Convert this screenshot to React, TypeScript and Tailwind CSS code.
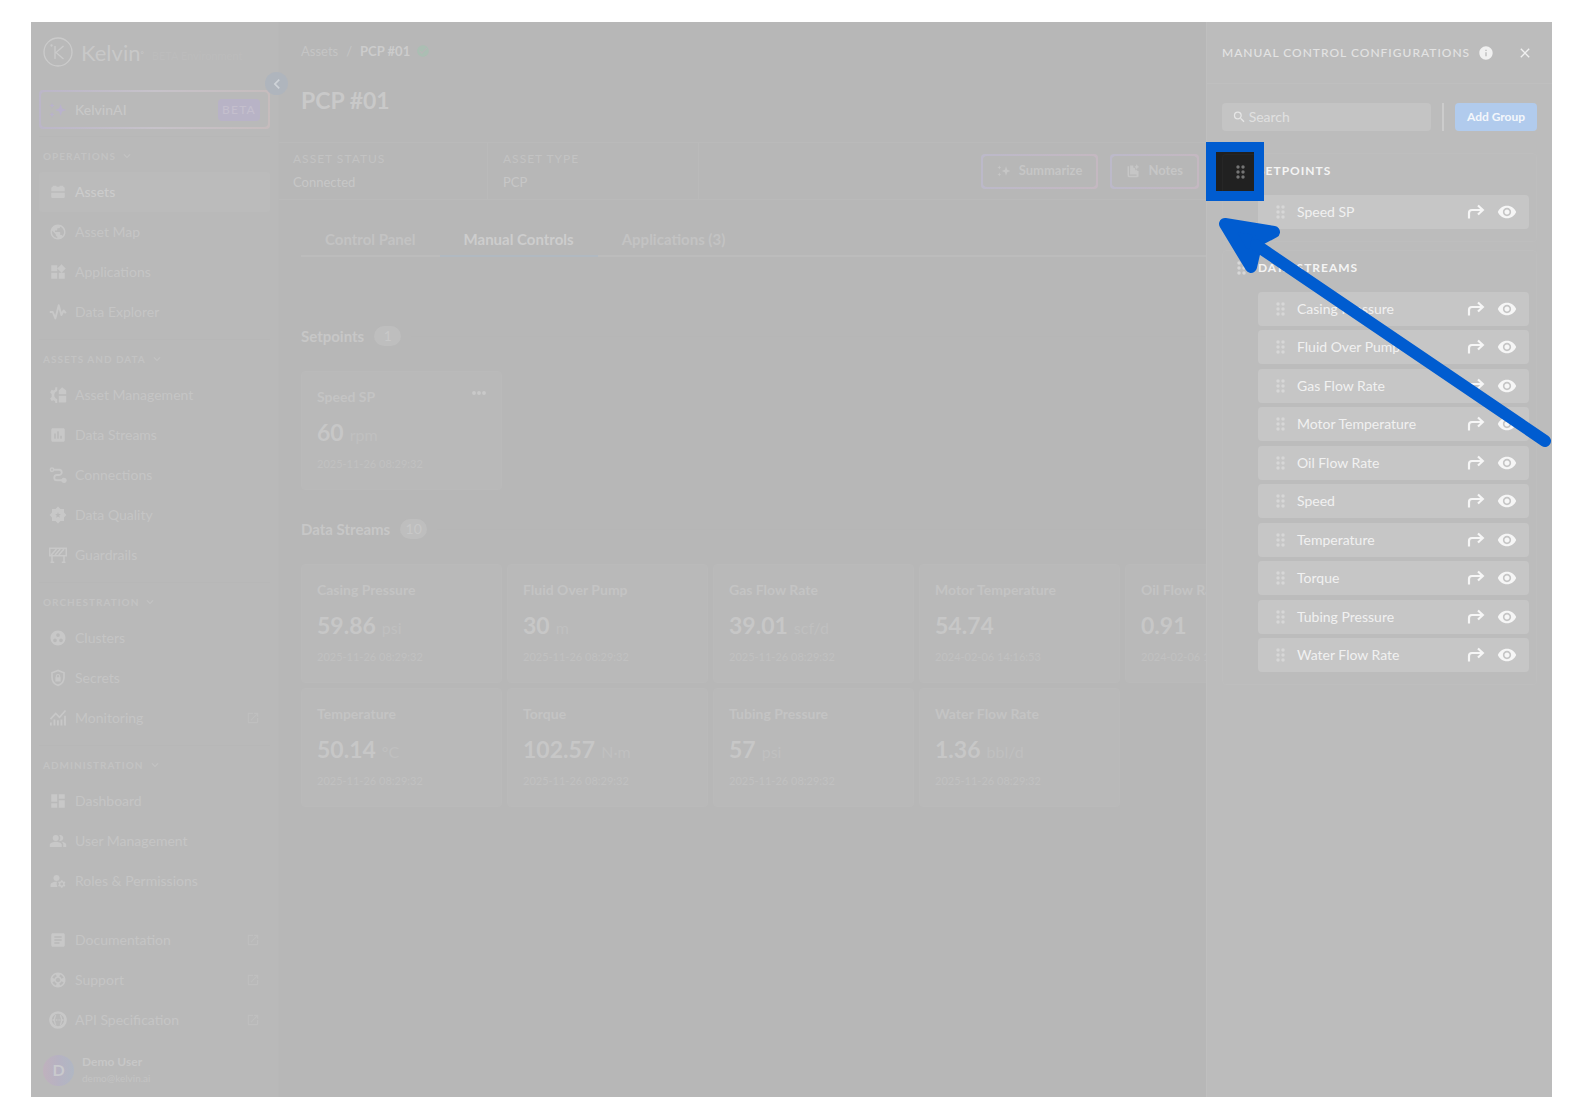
import React from 'react';
import {
  MdPublic,
  MdWidgets,
  MdAssessment,
  MdGroupWork,
  MdDashboard,
  MdPeopleAlt,
  MdManageAccounts,
  MdArticle,
  MdSupport,
  MdOpenInNew,
  MdCheckCircle,
  MdInfo,
  MdClose,
  MdSearch,
  MdRemoveRedEye,
  MdKeyboardArrowDown,
  MdKeyboardArrowLeft,
} from 'react-icons/md';

type IconProps = { className?: string };

const Svg = ({ className, children }: IconProps & { children: React.ReactNode }) => (
  <svg viewBox="0 0 24 24" className={className} fill="currentColor" aria-hidden="true">
    {children}
  </svg>
);

const AssetsIcon = ({ className }: IconProps) => (
  <Svg className={className}>
    <path d="M3 11V7a2 2 0 0 1 2-2V3.500h5V5h4V3.500h5V5a2 2 0 0 1 2 2v4z" />
    <path d="M3 13h18v5.500a1.500 1.500 0 0 1-1.500 1.500h-15A1.500 1.500 0 0 1 3 18.500z" />
  </Svg>
);

const PulseIcon = ({ className }: IconProps) => (
  <Svg className={className}>
    <path d="M1 12h4l3.500 8.500L13 3l3.500 13 3-6 3 3.500" fill="none" stroke="currentColor" strokeWidth="2.600" strokeLinejoin="round" />
  </Svg>
);

const ManagementIcon = ({ className }: IconProps) => (
  <Svg className={className}>
    <path d="M11 1.500v5A5.800 5.800 0 0 0 11 17.500v5H8.500L8 20l-2-1-2.500 1-2-3.500 2-2v-4l-2-2L3.500 5 6 6l2-1 .5-3.500z" />
    <path d="M13 11V6l4.500-4.500L23 6v5zM13 13h10v8a1 1 0 0 1-1 1h-9z" />
  </Svg>
);

const ConnectionsIcon = ({ className }: IconProps) => (
  <Svg className={className}>
    <circle cx="4" cy="5" r="2.200" fill="none" stroke="currentColor" strokeWidth="2" />
    <path d="M6 5h7.500a3.500 3.500 0 0 1 0 7h-3a3.500 3.500 0 0 0 0 7H18" fill="none" stroke="currentColor" strokeWidth="2.400" />
    <circle cx="20" cy="19" r="3.500" />
  </Svg>
);

const QualityIcon = ({ className }: IconProps) => (
  <Svg className={className}>
    <path
      fillRule="evenodd"
      d="M12 .8 15.300 4H20v4.700l3.200 3.300-3.200 3.300V20h-4.700L12 23.200 8.700 20H4v-4.700L.8 12 4 8.700V4h4.700zM12 8l-1 2.700-2.800.2 2.200 1.800-.8 2.800 2.400-1.600 2.400 1.600-.8-2.800 2.200-1.800-2.800-.2z"
    />
  </Svg>
);

const GuardrailsIcon = ({ className }: IconProps) => (
  <Svg className={className}>
    <path d="M1 3h22v10H1zM4 13v8M20 13v8M2 21.500h5M17 21.500h5M3 12l7-8M8 12l7-8M13 12l7-8" fill="none" stroke="currentColor" strokeWidth="2" />
  </Svg>
);

const SecretsIcon = ({ className }: IconProps) => (
  <Svg className={className}>
    <path d="M12 2 4 5v6c0 5 3.400 9.300 8 10.800 4.600-1.500 8-5.800 8-10.800V5z" fill="none" stroke="currentColor" strokeWidth="2.200" />
    <path fillRule="evenodd" d="M9 11V9.500a3 3 0 0 1 6 0V11h.5v5.500h-7V11zm1.600 0h2.800V9.500a1.400 1.400 0 0 0-2.800 0z" />
  </Svg>
);

const MonitoringIcon = ({ className }: IconProps) => (
  <Svg className={className}>
    <path d="M2 13.500 9 6l5 5 8-9" fill="none" stroke="currentColor" strokeWidth="2.200" />
    <path d="M2.500 22v-4M7.200 22v-8M11.900 22v-7M16.600 22v-8M21.300 22V9" stroke="currentColor" strokeWidth="2.400" />
  </Svg>
);

const ApiIcon = ({ className }: IconProps) => (
  <Svg className={className}>
    <circle cx="12" cy="12" r="10" fill="none" stroke="currentColor" strokeWidth="3.600" />
    <path d="M9.500 6C6.500 6 9 11 6 12c3 1 .5 6 3.500 6M14.500 6c3 0 .5 5 3.500 6-3 1-.5 6-3.500 6M9 12h1.400M11.500 12h1.200M13.800 12h1.400" fill="none" stroke="currentColor" strokeWidth="1.800" />
  </Svg>
);

const SparkleIcon = ({ className }: IconProps) => (
  <Svg className={className}>
    <path d="M15.500 4 17.500 10 23 12l-5.500 2-2 6-2-6L8 12l5.500-2zM4 2.500l1 2.500 2.500 1L5 7 4 9.500 3 7 .5 6 3 5zM4 14.500l1 2.500 2.500 1L5 19l-1 2.500L3 19 .5 18 3 17z" />
  </Svg>
);

const NotesIcon = ({ className }: IconProps) => (
  <Svg className={className}>
    <path d="M4 4v16a1.500 1.500 0 0 0 1.500 1.500H20" fill="none" stroke="currentColor" strokeWidth="2.600" />
    <path d="M7 2.500h5.500V6L16 7.500V11l1.500-1 2.500 2v6H7zM18.500 0l1.400 3.400L23 5l-3.100 1.500-1.400 3.500-1.400-3.500L14 5l3.100-1.600zM18 12h3.500v10H18z" />
  </Svg>
);

const MoreIcon = ({ className }: IconProps) => (
  <svg viewBox="0 0 14 4" className={className} fill="currentColor" aria-hidden="true">
    <circle cx="2" cy="2" r="1.900" />
    <circle cx="7" cy="2" r="1.900" />
    <circle cx="12" cy="2" r="1.900" />
  </svg>
);

const MoveIcon = ({ className }: IconProps) => (
  <svg viewBox="0 0 18 16" className={className} fill="none" stroke="currentColor" strokeWidth="2.200" aria-hidden="true">
    <path d="M2 14.500V9a3 3 0 0 1 3-3h11M11 1.500 15.800 6 11 10.500" />
  </svg>
);

const DragDots = ({ className }: IconProps) => (
  <svg viewBox="0 0 9 14" className={className} fill="currentColor" aria-hidden="true">
    {[2, 7, 12].map((y) => (
      <React.Fragment key={y}>
        <circle cx="2" cy={y} r="1.700" />
        <circle cx="7" cy={y} r="1.700" />
      </React.Fragment>
    ))}
  </svg>
);

type NavItem = { label: string; icon: React.ComponentType<IconProps>; external?: boolean; active?: boolean };

const groups: { title: string; items: NavItem[] }[] = [
  {
    title: 'OPERATIONS',
    items: [
      { label: 'Assets', icon: AssetsIcon, active: true },
      { label: 'Asset Map', icon: MdPublic },
      { label: 'Applications', icon: MdWidgets },
      { label: 'Data Explorer', icon: PulseIcon },
    ],
  },
  {
    title: 'ASSETS AND DATA',
    items: [
      { label: 'Asset Management', icon: ManagementIcon },
      { label: 'Data Streams', icon: MdAssessment },
      { label: 'Connections', icon: ConnectionsIcon },
      { label: 'Data Quality', icon: QualityIcon },
      { label: 'Guardrails', icon: GuardrailsIcon },
    ],
  },
  {
    title: 'ORCHESTRATION',
    items: [
      { label: 'Clusters', icon: MdGroupWork },
      { label: 'Secrets', icon: SecretsIcon },
      { label: 'Monitoring', icon: MonitoringIcon, external: true },
    ],
  },
  {
    title: 'ADMINISTRATION',
    items: [
      { label: 'Dashboard', icon: MdDashboard },
      { label: 'User Management', icon: MdPeopleAlt },
      { label: 'Roles & Permissions', icon: MdManageAccounts },
    ],
  },
];

const footerItems: NavItem[] = [
  { label: 'Documentation', icon: MdArticle, external: true },
  { label: 'Support', icon: MdSupport, external: true },
  { label: 'API Specification', icon: ApiIcon, external: true },
];

const streams = [
  { name: 'Casing Pressure', value: '59.86', unit: 'psi', time: '2025-11-26 08:29:32' },
  { name: 'Fluid Over Pump', value: '30', unit: 'm', time: '2025-11-26 08:29:32' },
  { name: 'Gas Flow Rate', value: '39.01', unit: 'scf/d', time: '2025-11-26 08:29:32' },
  { name: 'Motor Temperature', value: '54.74', unit: '', time: '2024-02-06 14:16:53' },
  { name: 'Oil Flow Rate', value: '0.91', unit: '', time: '2024-02-06 14:16:53' },
  { name: 'Temperature', value: '50.14', unit: '°C', time: '2025-11-26 08:29:32' },
  { name: 'Torque', value: '102.57', unit: 'N·m', time: '2025-11-26 08:29:32' },
  { name: 'Tubing Pressure', value: '57', unit: 'psi', time: '2025-11-26 08:29:32' },
  { name: 'Water Flow Rate', value: '1.36', unit: 'bbl/d', time: '2025-11-26 08:29:32' },
];

const configStreams = [
  'Casing Pressure',
  'Fluid Over Pump',
  'Gas Flow Rate',
  'Motor Temperature',
  'Oil Flow Rate',
  'Speed',
  'Temperature',
  'Torque',
  'Tubing Pressure',
  'Water Flow Rate',
];

const NavLink = ({ item }: { item: NavItem }) => {
  const Icon = item.icon;
  return (
    <a
      href="#"
      className={`flex h-10 items-center gap-2 rounded px-2.5 text-sm ${
        item.active ? 'bg-[#bbbbbb] font-medium text-[#cccccc]' : 'text-[#c5c5c5]'
      }`}
    >
      <Icon className="size-[18px] shrink-0 text-[#c8c8c8]" />
      <span className="flex-1">{item.label}</span>
      {item.external && <MdOpenInNew className="size-[14px] text-[#bfbfbf]" />}
    </a>
  );
};

const Sidebar = () => (
  <aside className="relative flex w-[248px] shrink-0 flex-col border-r border-[#b8b8b8] bg-[#b9b9b9] px-2">
    <div className="flex h-[68px] items-center gap-2 pb-2 pl-1">
      <svg viewBox="0 0 30 30" className="size-[30px] shrink-0 text-[#cbcbcb]" fill="none" stroke="currentColor" strokeWidth="1.300" aria-hidden="true">
        <circle cx="15" cy="15" r="14" />
        <path d="M12 9v13M20.500 9 13 15.500l7.500 6.500" />
        <circle cx="8.500" cy="8.500" r=".5" />
      </svg>
      <span className="text-[22px] text-[#c8c8c8]">
        Kelvin<sup className="text-[8px]">°</sup>
      </span>
      <span className="pt-2 text-[11px] whitespace-nowrap text-[#bcbcbc]">BETA Environment</span>
    </div>

    <div className="mb-[7px] rounded bg-gradient-to-r from-[#bbb6c8] via-[#c6c2c9] to-[#c6bcbd] p-0.5">
      <a href="#" className="flex h-[35px] items-center gap-2 rounded-sm bg-[#b9b9b9] px-2 text-sm font-medium text-[#c8c8c8]">
        <SparkleIcon className="size-[18px] text-[#b9b2cc]" />
        <span className="flex-1">KelvinAI</span>
        <span className="rounded-sm bg-[#b8b3c6] px-1 text-xs leading-[22px] tracking-widest text-[#c4bfcd]">BETA</span>
      </a>
    </div>

    <button
      type="button"
      aria-label="Collapse menu"
      className="absolute top-[50px] -right-2.5 z-10 flex size-[23px] items-center justify-center rounded-full bg-[#afb5bd] text-[#cfd3d8]"
    >
      <MdKeyboardArrowLeft className="size-5" />
    </button>

    <nav>
      {groups.map((group) => (
        <section key={group.title} className="border-t border-[#b7b7b7] pt-1 pb-[7px]">
          <button type="button" className="mb-px flex h-[30px] items-center gap-1 pl-1 text-[10px] font-bold tracking-[1px] text-[#c3c3c3]">
            {group.title}
            <MdKeyboardArrowDown className="size-[14px]" />
          </button>
          {group.items.map((item) => (
            <NavLink key={item.label} item={item} />
          ))}
        </section>
      ))}
    </nav>

    <div className="mt-auto pb-[11px]">
      {footerItems.map((item) => (
        <NavLink key={item.label} item={item} />
      ))}
      <div className="mt-3.5 flex items-center gap-2 pl-1">
        <div className="flex size-[31px] items-center justify-center rounded-full bg-gradient-to-r from-[#bfb1bd] via-[#b6b2c2] to-[#b0b7c3] font-bold text-[#c9c9cd]">
          D
        </div>
        <div>
          <div className="text-xs leading-4 font-bold text-[#c7c7c7]">Demo User</div>
          <div className="text-[10px] leading-4 text-[#c4c4c4]">demo@kelvin.ai</div>
        </div>
      </div>
    </div>
  </aside>
);

const StreamCard = ({ name, value, unit, time, menu }: (typeof streams)[number] & { menu?: boolean }) => (
  <article className="h-[119px] rounded border border-[#bababa] bg-[#b9b9b9] px-[15px] pt-[15px]">
    <div className="flex items-start justify-between">
      <h3 className="text-sm font-bold text-[#c4c4c4]">{name}</h3>
      {menu && (
        <button type="button" aria-label="More actions" className="pt-1 text-[#c9c9c9]">
          <MoreIcon className="h-1 w-3.5" />
        </button>
      )}
    </div>
    <div className="mt-[11px] flex h-7 items-baseline gap-1.5">
      <span className="text-[23px] leading-7 font-bold text-[#c7c7c7]">{value}</span>
      <span className="text-base leading-7 text-[#c0c0c0]">{unit}</span>
    </div>
    <p className="mt-2 text-[11px] leading-5 text-[#c1c1c1]">{time}</p>
  </article>
);

const SectionHeading = ({ title, count }: { title: string; count: number }) => (
  <div className="flex items-center gap-2.5">
    <h2 className="text-[15px] leading-5 font-bold text-[#c7c7c7]">{title}</h2>
    <span className="w-[27px] rounded-full bg-[#bebebe] text-center text-sm leading-5 text-[#c8c8c8]">{count}</span>
    <span className="h-px flex-1 bg-[#b6b6b6]"></span>
  </div>
);

const OutlineButton = ({ icon: Icon, label }: { icon: React.ComponentType<IconProps>; label: string }) => (
  <button type="button" className="rounded bg-gradient-to-r from-[#bcb9c9] to-[#c4b8c1] p-0.5">
    <span className="flex h-[31px] items-center gap-2 rounded-sm bg-[#b7b7b7] px-[14px] text-[13px] font-bold text-[#c6c6c6]">
      <Icon className="size-[14px]" />
      {label}
    </span>
  </button>
);

const Main = () => (
  <main className="min-w-0 flex-1 overflow-hidden bg-[#b7b7b7]">
    <nav aria-label="Breadcrumb" className="flex items-center gap-2 pt-[19px] pl-[22px] text-[13px] leading-5 text-[#c5c5c5]">
      <a href="#">Assets</a>
      <span>/</span>
      <span className="flex items-center gap-1.5 font-bold text-[#cccccc]">
        PCP #01
        <MdCheckCircle className="size-[14px] text-[#abbeb3]" />
      </span>
    </nav>
    <h1 className="mt-[23px] pl-[22px] text-[23px] leading-8 font-bold text-[#c9c9c9]">PCP #01</h1>

    <div className="mt-[26px] flex h-[58px] border-y border-[#bababa]">
      <div className="w-[209px] border-r border-[#bababa] pt-2 pl-3.5">
        <div className="text-xs leading-4 tracking-[1px] text-[#c3c3c3]">ASSET STATUS</div>
        <div className="mt-[5px] text-[13px] leading-5 text-[#c7c7c7]">Connected</div>
      </div>
      <div className="w-[211px] border-r border-[#bababa] pt-2 pl-[15px]">
        <div className="text-xs leading-4 tracking-[1px] text-[#c3c3c3]">ASSET TYPE</div>
        <div className="mt-[5px] text-[13px] leading-5 text-[#c7c7c7]">PCP</div>
      </div>
      <div className="mr-[353px] ml-auto flex items-center gap-3">
        <OutlineButton icon={SparkleIcon} label="Summarize" />
        <OutlineButton icon={NotesIcon} label="Notes" />
      </div>
    </div>

    <div role="tablist" className="mt-6 ml-[22px] flex h-[33px] border-b-2 border-[#bcbcbc] text-[15px] font-bold text-[#c3c3c3]">
      <button role="tab" type="button" aria-selected="false" className="px-6">Control Panel</button>
      <button role="tab" type="button" aria-selected="true" className="-mb-0.5 border-b-2 border-[#b1b9c1] px-6 text-[#cdcdcd]">
        Manual Controls
      </button>
      <button role="tab" type="button" aria-selected="false" className="px-6">Applications (3)</button>
    </div>

    <div className="pt-[69px] pl-[22px]">
      <SectionHeading title="Setpoints" count={1} />
      <div className="mt-[25px] mb-[29px] grid grid-cols-[repeat(5,201px)]">
        <StreamCard name="Speed SP" value="60" unit="rpm" time="2025-11-26 08:29:32" menu />
      </div>
      <SectionHeading title="Data Streams" count={10} />
      <div className="mt-[25px] grid grid-cols-[repeat(5,201px)] gap-[5px]">
        {streams.map((stream) => (
          <StreamCard key={stream.name} {...stream} />
        ))}
      </div>
    </div>
  </main>
);

const ConfigRow = ({ label }: { label: string }) => (
  <li className="flex h-[34px] items-center rounded bg-[#c6c6c6] pr-3 pl-[18px] text-sm text-[#f1f1f1]">
    <DragDots className="h-[14px] w-[9px] text-[#d7d7d7]" />
    <span className="ml-3 flex-1">{label}</span>
    <button type="button" aria-label={`Move ${label}`} className="mr-3 text-[#f6f6f6]">
      <MoveIcon className="h-4 w-[18px]" />
    </button>
    <button type="button" aria-label={`Toggle ${label}`} className="text-[#f6f6f6]">
      <MdRemoveRedEye className="size-5" />
    </button>
  </li>
);

const ConfigGroup = ({ title, rows, listClass = '' }: { title: string; rows: string[]; listClass?: string }) => (
  <section className="rounded border border-[#bebebe] pr-[7px] pb-3 pl-[35px]">
    <div className="-ml-[21px] flex h-[41px] items-center gap-3 pb-2">
      <DragDots className="h-[14px] w-[9px] text-[#d7d7d7]" />
      <h3 className="text-xs font-bold tracking-[1px] text-[#f4f4f4]">{title}</h3>
    </div>
    <ul className={`flex flex-col justify-between ${listClass}`}>
      {rows.map((row) => (
        <ConfigRow key={row} label={row} />
      ))}
    </ul>
  </section>
);

const ConfigPanel = () => (
  <aside className="absolute inset-y-0 right-0 w-[346px] border-l border-[#bfbfbf] bg-[#bcbcbc]">
    <header className="flex h-[62px] items-center border-b border-[#bfbfbf] pr-[19px] pl-[15px]">
      <h2 className="text-xs font-medium tracking-[1px] whitespace-nowrap text-[#e3e3e3]">MANUAL CONTROL CONFIGURATIONS</h2>
      <MdInfo className="ml-2 size-4 shrink-0 text-[#f0f0f0]" />
      <button type="button" aria-label="Close" className="ml-auto text-[#f0f0f0]">
        <MdClose className="size-4" />
      </button>
    </header>

    <div className="flex flex-col gap-2 px-[15px] pt-[19px]">
      <div className="mb-[14px] flex h-7 items-center">
        <label className="flex h-7 flex-1 items-center gap-0.5 rounded bg-[#c4c4c4] pl-2.5 text-[#e6e6e6]">
          <MdSearch className="size-4" />
          <input type="search" aria-label="Search" placeholder="Search" className="w-full bg-transparent text-sm outline-none placeholder:text-[#e0e0e0]" />
        </label>
        <span className="mx-[11px] h-7 w-0.5 bg-[#cccccc]"></span>
        <button type="button" className="h-7 w-[82px] rounded bg-[#b1cbed] text-xs font-bold text-[#f4f7fb]">Add Group</button>
      </div>
      <ConfigGroup title="SETPOINTS" rows={['Speed SP']} />
      <ConfigGroup title="DATA STREAMS" rows={configStreams} listClass="min-h-[380px]" />
    </div>

    {/* Spotlight on the drag handle */}
    <div className="absolute top-[120px] -left-px h-[59px] w-[58px] border-[10px] border-[#005cd0] bg-[#202020]">
      <div className="mt-0.5 ml-1.5 flex h-[37px] items-center rounded-tl border-t border-l border-[#262626] bg-[#212121] pb-0.5 pl-[13px]">
        <DragDots className="h-[14px] w-[9px] text-[#747474]" />
      </div>
    </div>

    {/* Pointer arrow */}
    <svg viewBox="0 0 346 280" className="pointer-events-none absolute top-[180px] -left-px h-[280px] w-[346px]" fill="#005cd0" stroke="#005cd0" aria-hidden="true">
      <path d="M19 22 68 30 51 39 45 65z" strokeWidth="12" strokeLinejoin="round" />
      <path d="M50 43 339 239" strokeWidth="12" strokeLinecap="round" />
    </svg>
  </aside>
);

const App = () => {
  return (
    <div className="flex min-h-screen bg-white pt-[22px] pr-8 pb-[23px] pl-[31px] font-['Lato',sans-serif]">
      <div className="relative flex flex-1 overflow-hidden">
        <Sidebar />
        <Main />
        <ConfigPanel />
      </div>
    </div>
  );
};

export default App;
